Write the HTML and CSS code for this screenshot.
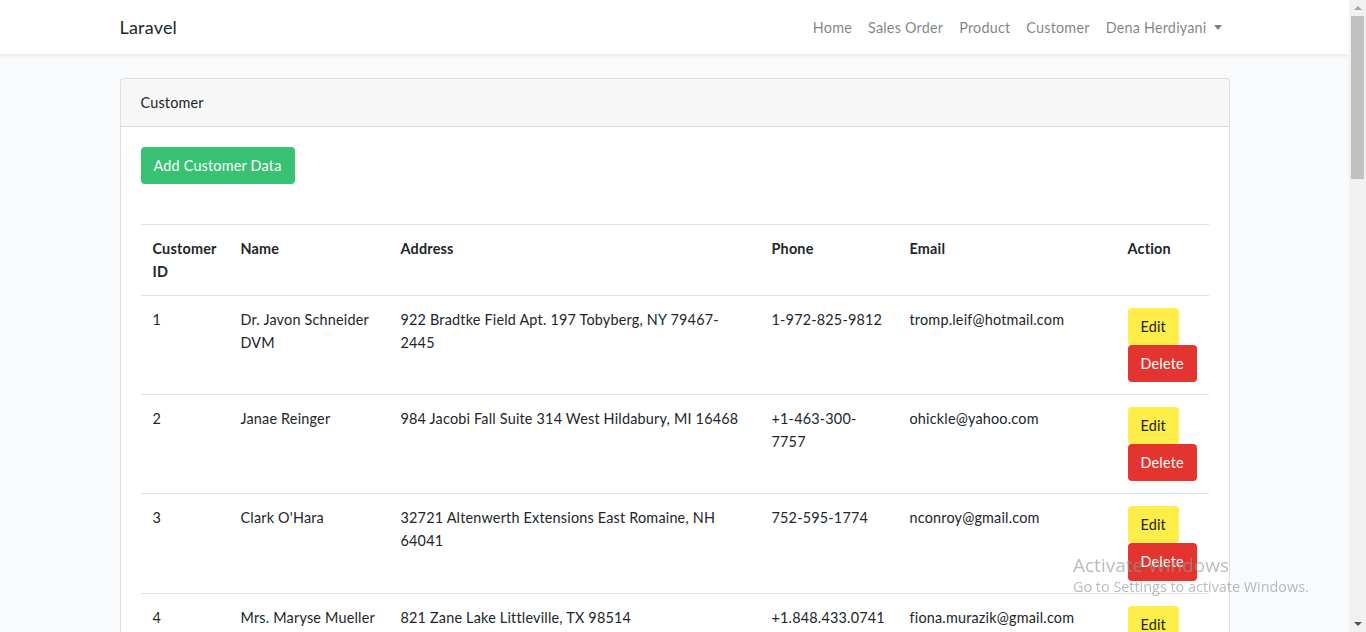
FILE: index.html
```html
<!DOCTYPE html>
<html lang="en">
<head>
<meta charset="utf-8">
<title>Laravel</title>
<link rel="stylesheet" href="styles.css">
</head>
<body>
<nav class="navbar">
  <div class="container nav-inner">
    <a class="brand" href="#">Laravel</a>
    <ul class="nav-links">
      <li><a href="#">Home</a></li>
      <li><a href="#">Sales Order</a></li>
      <li><a href="#">Product</a></li>
      <li><a href="#">Customer</a></li>
      <li><a href="#" class="dropdown">Dena Herdiyani<span class="caret"></span></a></li>
    </ul>
  </div>
</nav>
<main class="container main">
  <div class="card">
    <div class="card-header">Customer</div>
    <div class="card-body">
      <a href="#" class="btn btn-success">Add Customer Data</a>
      <table class="table">
        <colgroup>
          <col class="c-id"><col class="c-name"><col class="c-addr"><col class="c-phone"><col class="c-email"><col class="c-action">
        </colgroup>
        <thead>
          <tr><th>Customer ID</th><th>Name</th><th>Address</th><th>Phone</th><th>Email</th><th>Action</th></tr>
        </thead>
        <tbody>
          <tr>
            <td>1</td><td>Dr. Javon Schneider DVM</td><td>922 Bradtke Field Apt. 197 Tobyberg, NY 79467-2445</td><td>1-972-825-9812</td><td>tromp.leif@hotmail.com</td>
            <td><div class="actions"><a href="#" class="btn btn-warning">Edit</a><a href="#" class="btn btn-danger">Delete</a></div></td>
          </tr>
          <tr>
            <td>2</td><td>Janae Reinger</td><td>984 Jacobi Fall Suite 314 West Hildabury, MI 16468</td><td>+1-463-300-7757</td><td>ohickle@yahoo.com</td>
            <td><div class="actions"><a href="#" class="btn btn-warning">Edit</a><a href="#" class="btn btn-danger">Delete</a></div></td>
          </tr>
          <tr>
            <td>3</td><td>Clark O'Hara</td><td>32721 Altenwerth Extensions East Romaine, NH 64041</td><td>752-595-1774</td><td>nconroy@gmail.com</td>
            <td><div class="actions"><a href="#" class="btn btn-warning">Edit</a><a href="#" class="btn btn-danger">Delete</a></div></td>
          </tr>
          <tr>
            <td>4</td><td>Mrs. Maryse Mueller</td><td>821 Zane Lake Littleville, TX 98514</td><td>+1.848.433.0741</td><td>fiona.murazik@gmail.com</td>
            <td><div class="actions"><a href="#" class="btn btn-warning">Edit</a><a href="#" class="btn btn-danger">Delete</a></div></td>
          </tr>
          <tr>
            <td>5</td><td>Prof. Lela Kunze</td><td>5436 Mohr Roads Apt. 211 Port Ward, KS 20145</td><td>(425) 391-0472</td><td>lkunze@gmail.com</td>
            <td><div class="actions"><a href="#" class="btn btn-warning">Edit</a><a href="#" class="btn btn-danger">Delete</a></div></td>
          </tr>
        </tbody>
      </table>
    </div>
  </div>
</main>
<div class="watermark">
  <div class="wm-title">Activate Windows</div>
  <div class="wm-sub">Go to Settings to activate Windows.</div>
</div>
<div class="scrollbar" aria-hidden="true">
  <div class="sb-btn"><span class="sb-up"></span></div>
  <div class="sb-thumb"></div>
  <div class="sb-space"></div>
  <div class="sb-btn"><span class="sb-down"></span></div>
</div>
</body>
</html>
```
FILE: styles.css
```css
* { box-sizing: border-box; }
html { background: #f8fafc; }
body {
  margin: 0 17px 0 0;
  font-family: "Lato", "Noto Sans", sans-serif;
  font-size: 14.4px;
  line-height: 1.6;
  letter-spacing: 0.2px;
  color: #212529;
  background: #f8fafc;
}
a { text-decoration: none; }
.container {
  max-width: 1140px;
  margin: 0 auto;
  padding: 0 15px;
}
.navbar {
  background: #fff;
  box-shadow: 0 .125rem .25rem rgba(0,0,0,.075);
  padding: 7.5px 0;
}
.nav-inner {
  display: flex;
  align-items: center;
  justify-content: space-between;
}
.brand {
  color: #212529;
  font-size: 18px;
  line-height: 1.6;
  padding: 5px 0;
}
.nav-links {
  list-style: none;
  margin: 0;
  padding: 0;
  display: flex;
}
.nav-links a {
  display: block;
  padding: 8px 8px;
  color: rgba(0,0,0,.5);
}
.caret {
  display: inline-block;
  margin-left: 7px;
  vertical-align: 3px;
  border-top: 5px solid;
  border-left: 4.5px solid transparent;
  border-right: 4.5px solid transparent;
}
.main { padding-top: 24px; }
.card {
  background: #fff;
  border: 1px solid rgba(0,0,0,.125);
  border-radius: 4px;
}
.card-header {
  padding: 12px 20px;
  background: rgba(0,0,0,.03);
  border-bottom: 1px solid rgba(0,0,0,.125);
}
.card-body { padding: 20px; }
.btn {
  display: inline-block;
  padding: 6px 12px;
  border: 1px solid transparent;
  border-radius: 4px;
  line-height: 1.6;
  font-size: 14.4px;
}
.btn-success { background: #38c172; color: #fff; }
.btn-warning { background: #ffed4a; color: #212529; }
.btn-danger { background: #e3342f; color: #fff; }
.table {
  width: 100%;
  margin-top: 40px;
  border-collapse: collapse;
  table-layout: fixed;
}
.c-id { width: 88px; }
.c-name { width: 160px; }
.c-addr { width: 371px; }
.c-phone { width: 138px; }
.c-email { width: 218px; }
.c-action { width: 93px; }
.table th, .table td {
  padding: 12px;
  vertical-align: top;
  border-top: 1px solid #dee2e6;
  text-align: left;
}
.table th { font-weight: 700; }
.actions {
  display: flex;
  flex-direction: column;
  align-items: flex-start;
}
.watermark {
  position: fixed;
  left: 1073px;
  top: 553px;
  color: rgba(150,150,150,.65);
  font-family: "Open Sans", "Noto Sans", sans-serif;
  letter-spacing: 0;
  pointer-events: none;
  line-height: 1.3;
}
.wm-title { font-size: 19px; }
.wm-sub { font-size: 14.4px; }
.scrollbar {
  position: fixed;
  top: 0;
  right: 0;
  width: 17px;
  height: 100vh;
  background: #f1f1f1;
  display: flex;
  flex-direction: column;
}
.sb-btn {
  height: 16px;
  display: flex;
  align-items: center;
  justify-content: center;
}
.sb-up {
  border-bottom: 4px solid #a3a3a3;
  border-left: 4px solid transparent;
  border-right: 4px solid transparent;
}
.sb-down {
  border-top: 4px solid #505050;
  border-left: 4px solid transparent;
  border-right: 4px solid transparent;
}
.sb-thumb {
  height: 163px;
  margin: 0 2px;
  background: #c1c1c1;
}
.sb-space { flex: 1; }
```
